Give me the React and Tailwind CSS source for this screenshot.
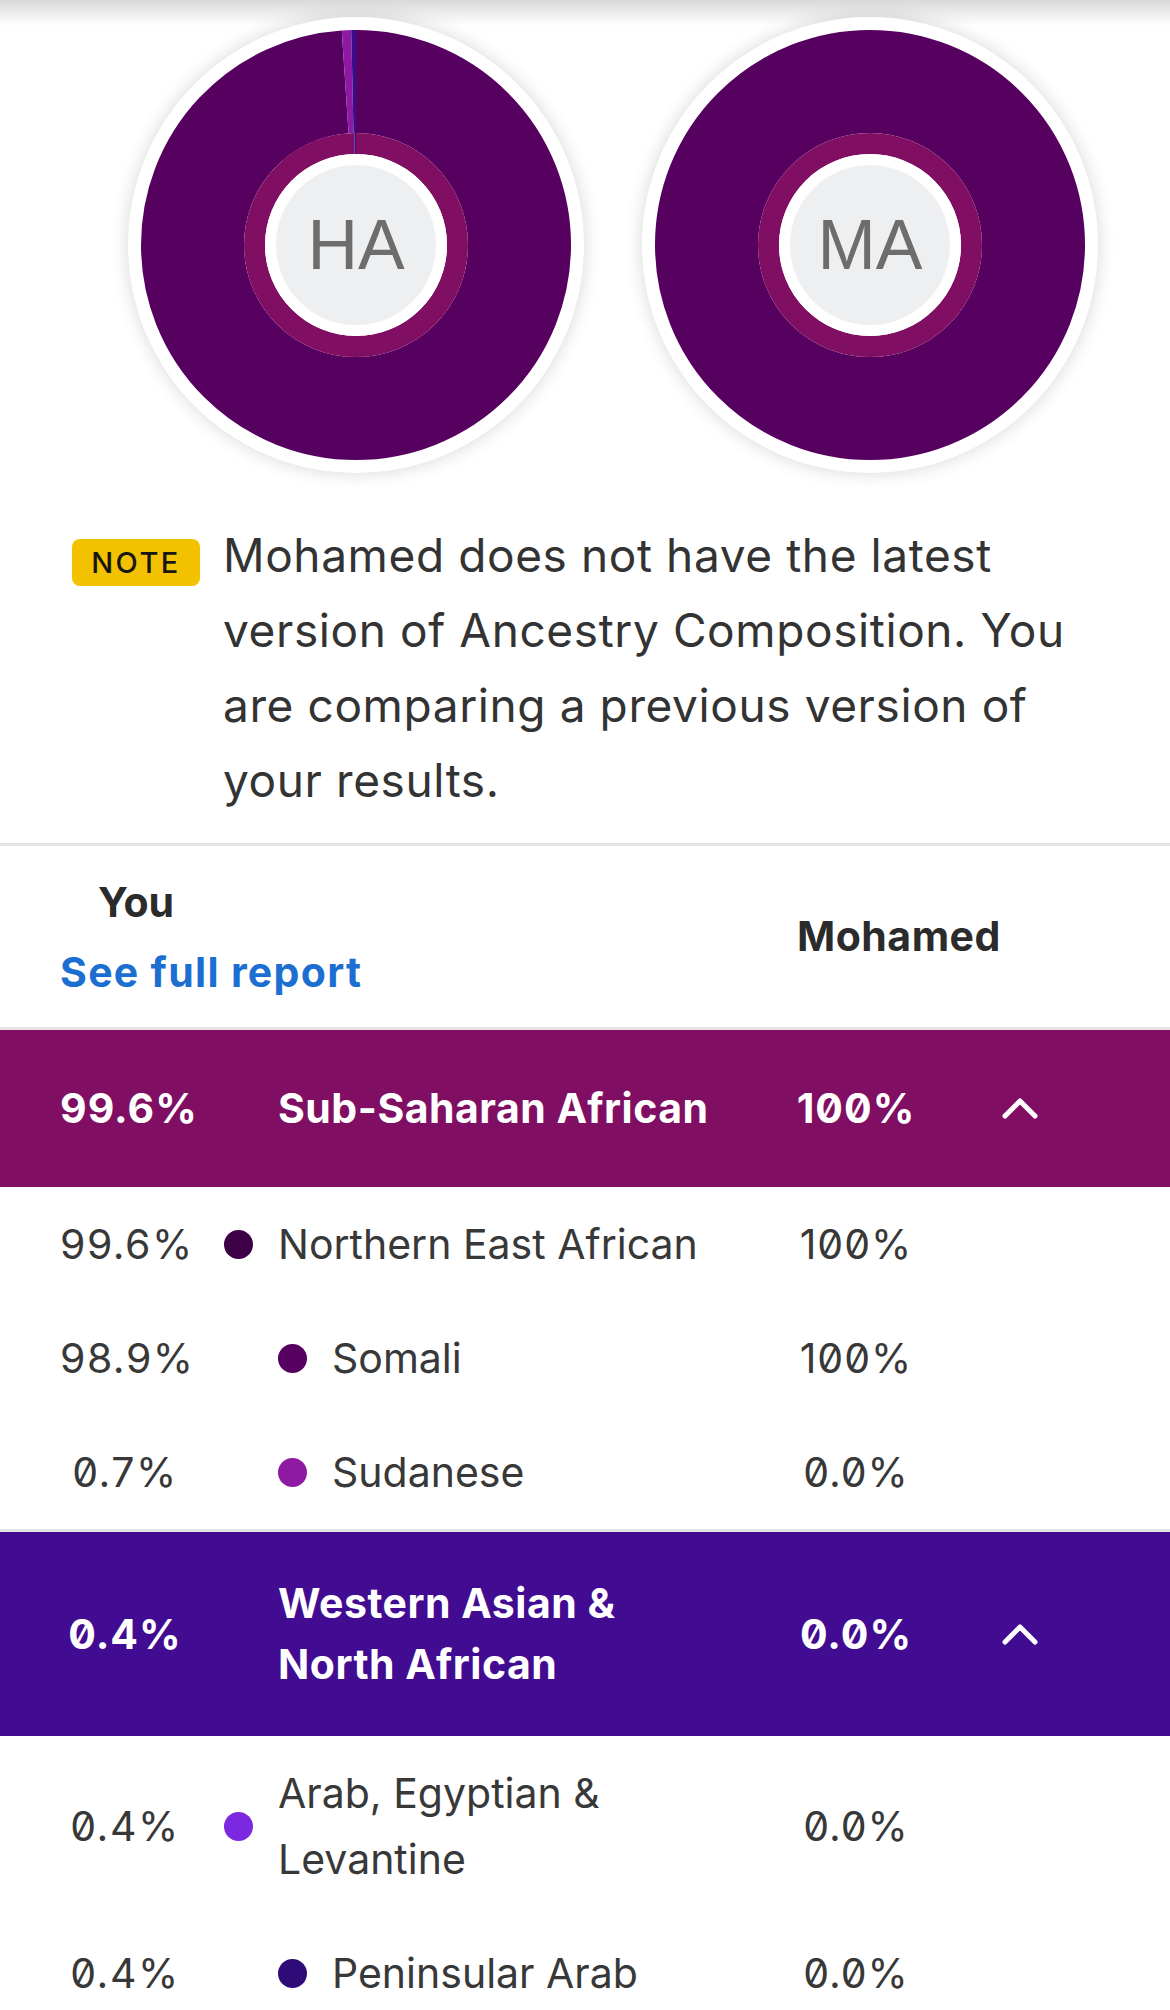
import React from 'react';

const font = "font-['Inter','Noto_Sans',sans-serif] [font-feature-settings:'zero']";

const sections = [
  {
    pct: '99.6%',
    name: 'Sub-Saharan African',
    other: '100%',
    bar: 'bg-[#800e62]',
    rows: [
      { pct: '99.6%', name: 'Northern East African', other: '100%', dot: 'bg-[#3d0046]', level: 1 },
      { pct: '98.9%', name: 'Somali', other: '100%', dot: 'bg-[#560060]', level: 2 },
      { pct: '0.7%', name: 'Sudanese', other: '0.0%', dot: 'bg-[#8e1aa3]', level: 2 },
    ],
  },
  {
    pct: '0.4%',
    name: 'Western Asian & North African',
    other: '0.0%',
    bar: 'bg-[#420c92]',
    rows: [
      { pct: '0.4%', name: 'Arab, Egyptian & Levantine', other: '0.0%', dot: 'bg-[#7b28e0]', level: 1 },
      { pct: '0.4%', name: 'Peninsular Arab', other: '0.0%', dot: 'bg-[#2f0b78]', level: 2 },
    ],
  },
];

// arc on a ring, fractions measured clockwise from the top
const Arc = ({ r, width, from, to, color }) => {
  const len = 2 * Math.PI * r;
  return (
    <circle
      cx="228"
      cy="228"
      r={r}
      fill="none"
      stroke={color}
      strokeWidth={width}
      strokeDasharray={`${len * (to - from)} ${len}`}
      strokeDashoffset={-len * from}
      transform="rotate(-90 228 228)"
    />
  );
};

const Donut = ({ initials, outer, inner }) => (
  <div className="w-[456px] h-[456px] rounded-full bg-white shadow-[0_0_18px_rgba(0,0,0,0.16)] shrink-0">
    <svg width="456" height="456" viewBox="0 0 456 456">
      {outer.map((s, i) => (
        <Arc key={'o' + i} r={163.5} width={103} {...s} />
      ))}
      {inner.map((s, i) => (
        <Arc key={'i' + i} r={101.5} width={21} {...s} />
      ))}
      <circle cx="228" cy="228" r="91" fill="#ffffff" />
      <circle cx="228" cy="228" r="80" fill="#eeeff1" />
      <text
        x="228"
        y="228"
        textAnchor="middle"
        dominantBaseline="central"
        fill="#6d6d6d"
        fontSize="70"
        fontFamily="'Liberation Sans', Arial, sans-serif"
      >
        {initials}
      </text>
    </svg>
  </div>
);

const Chevron = () => (
  <svg width="36" height="21" viewBox="0 0 36 21" fill="none">
    <polyline points="3,18 18,3 33,18" stroke="#ffffff" strokeWidth="5" strokeLinecap="round" strokeLinejoin="round" />
  </svg>
);

const Divider = () => <div className="h-[3px] bg-[#e4e4e4]" />;

export default function App() {
  return (
    <div className={`${font} w-[1170px] min-h-[2010px] bg-white text-[#383838] overflow-hidden`}>
      {/* Donuts */}
      <div className="relative pt-[17px]">
        <div className="absolute inset-x-0 top-0 h-[26px] bg-linear-to-b from-[#d9d9d9] to-white/0" />
        <div className="relative flex pl-[128px] gap-[58px]">
          <Donut
            initials="HA"
            outer={[
              { from: 0, to: 0.989, color: '#560060' },
              { from: 0.989, to: 0.996, color: '#8e1aa3' },
              { from: 0.996, to: 1, color: '#3b0c8a' },
            ]}
            inner={[
              { from: 0, to: 0.996, color: '#800e62' },
              { from: 0.996, to: 1, color: '#3b0c8a' },
            ]}
          />
          <Donut
            initials="MA"
            outer={[{ from: 0, to: 1, color: '#560060' }]}
            inner={[{ from: 0, to: 1, color: '#800e62' }]}
          />
        </div>
      </div>

      {/* Note */}
      <div className="flex items-start px-[72px] mt-[45px] pb-[25px]">
        <div className="mt-[21px] w-[128px] h-[47px] shrink-0 rounded-[8px] bg-[#f2c200] flex items-center justify-center text-[29px] font-medium tracking-[2.5px] text-[#161616]">
          NOTE
        </div>
        <p className="pl-[23px] text-[46px] leading-[75px] tracking-[0.6px] text-[#333333]">
          Mohamed does not have the latest version of Ancestry Composition. You are comparing a previous version of your results.
        </p>
      </div>
      <Divider />

      {/* Column headers */}
      <div className="flex items-center h-[181px] pl-[60px] text-[41px] font-bold">
        <div className="w-[680px] leading-[70px]">
          <div className="w-[152px] text-center text-[#2b2b2b]">You</div>
          <div className="text-[#1c6fd1] whitespace-nowrap tracking-[1.3px]">See full report</div>
        </div>
        <div className="pl-[57px] text-[#2b2b2b] tracking-[0.5px]">Mohamed</div>
      </div>
      <Divider />

      {sections.map((sec, si) => (
        <div key={sec.name}>
          {si > 0 && <Divider />}
          <div className={`${sec.bar} flex items-center min-h-[157px] py-[41px] pl-[60px] text-white text-[41px] font-bold leading-[61px]`}>
            <div className="w-[130px] text-center tracking-[1px]">{sec.pct}</div>
            <div className="w-[550px] pl-[88px] pr-[10px] tracking-[0.5px]">{sec.name}</div>
            <div className="w-[232px] text-center tracking-[1px]">{sec.other}</div>
            <div className="w-[96px] flex justify-center">
              <Chevron />
            </div>
          </div>
          {sec.rows.map((row) => (
            <div key={row.name} className="flex items-center py-[24px] pl-[60px] text-[41px] leading-[66px]">
              <div className="w-[130px] text-center tracking-[1.5px]">{row.pct}</div>
              <div className={`w-[550px] flex items-center pr-[10px] ${row.level === 1 ? 'pl-[34px]' : 'pl-[88px]'}`}>
                <span className={`w-[29px] h-[29px] rounded-full shrink-0 ${row.dot}`} />
                <span className="pl-[25px]">{row.name}</span>
              </div>
              <div className="w-[232px] text-center tracking-[1px]">{row.other}</div>
            </div>
          ))}
        </div>
      ))}
    </div>
  );
}
